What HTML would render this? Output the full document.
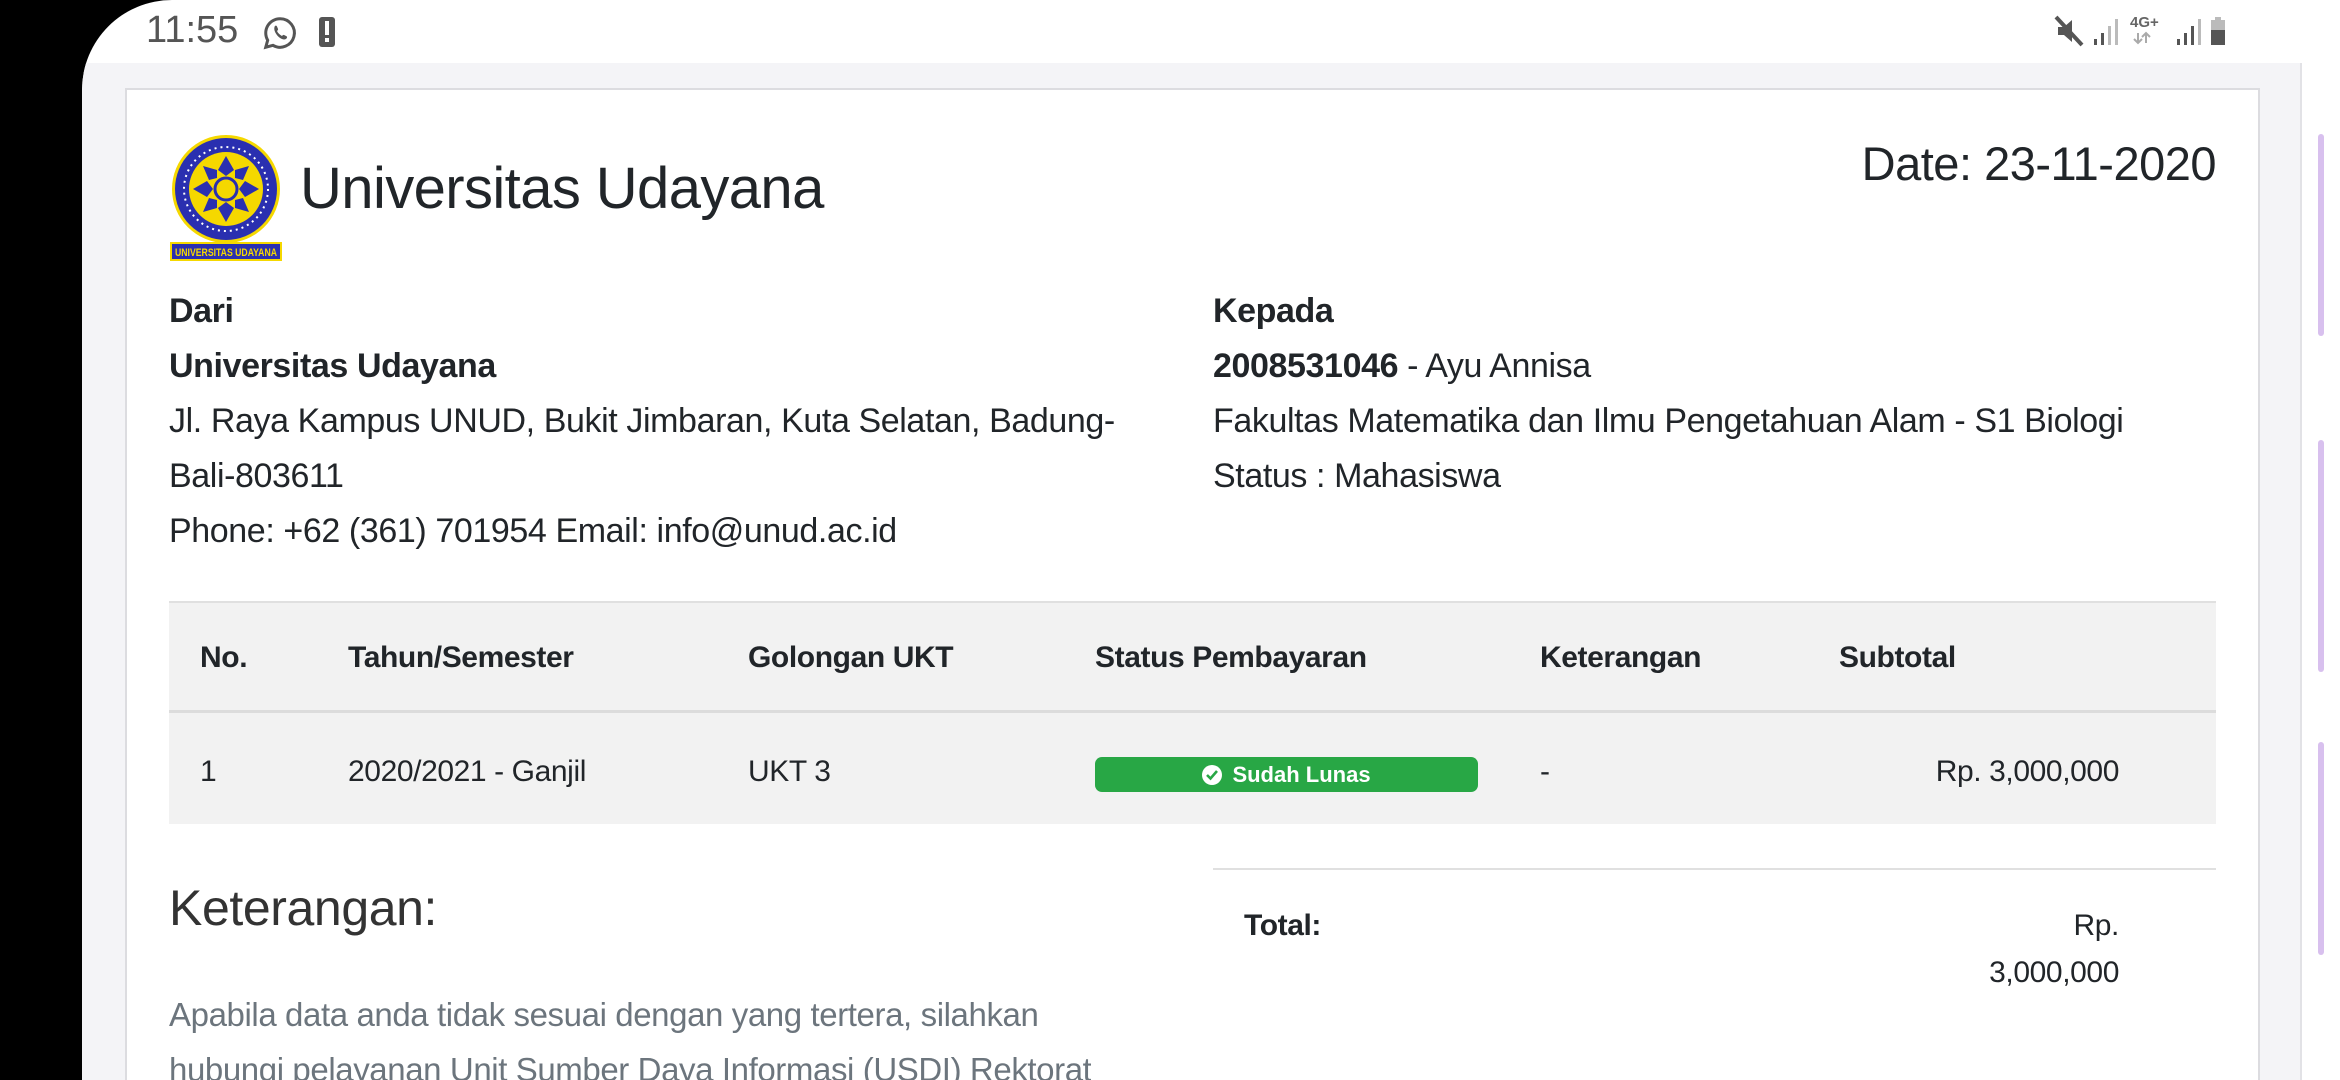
<!DOCTYPE html>
<html><head><meta charset="utf-8"><style>
*{margin:0;padding:0;box-sizing:border-box}
html,body{width:2340px;height:1080px;overflow:hidden;background:#000;font-family:"Liberation Sans",sans-serif;color:#212529}
.screen{position:absolute;left:82px;top:0;width:2258px;height:1080px;background:#fff;border-top-left-radius:90px;overflow:hidden}
.bg{position:absolute;left:0;top:63px;width:2220px;height:1017px;background:#f4f4f7;border-right:2px solid #e2e2e6}
.card{position:absolute;left:43px;top:88px;width:2135px;height:992px;background:#fff;border:2px solid #dcdce0;border-bottom:none}
.t{position:absolute;white-space:nowrap;font-size:34px;letter-spacing:-0.4px;line-height:40px}
.b{font-weight:bold}
.sb{position:absolute;left:2236px;width:6px;border-radius:3px;background:#d8c0ee}
</style></head><body>
<div class="screen">
 <div class="t" style="left:64px;top:10px;font-size:38px;color:#555;letter-spacing:0">11:55</div>
 <svg style="position:absolute;left:180px;top:15px" width="36" height="36" viewBox="0 0 24 24"><path d="M12 2.5a9.5 9.5 0 0 0-8.2 14.3L2.5 21.5l4.8-1.3A9.5 9.5 0 1 0 12 2.5z" fill="none" stroke="#555" stroke-width="2"/><path d="M8.5 7.5c.5-.6 1.2-.5 1.5.2l.7 1.6c.2.5-.4 1-.7 1.4.7 1.5 1.9 2.6 3.3 3.3.4-.4.9-1 1.4-.7l1.5.8c.6.3.7 1 .2 1.5-1.3 1.4-3.5.6-5.2-.9-1.6-1.5-3.9-4.6-2.7-7.2z" fill="#555"/></svg>
 <div style="position:absolute;left:237px;top:17px;width:16px;height:30px;background:#555;border-radius:3px"></div>
 <div style="position:absolute;left:243px;top:21px;width:4px;height:14px;background:#fff"></div>
 <div style="position:absolute;left:243px;top:38px;width:4px;height:4px;background:#fff"></div>
 <svg style="position:absolute;left:1972px;top:12px" width="200" height="38" viewBox="0 0 200 36">
  <path d="M4 14h6l8-7v22l-8-7H4z" fill="#555"/><path d="M2 4l26 28" stroke="#555" stroke-width="4"/>
  <rect x="40" y="26" width="3" height="6" fill="#555"/><rect x="47" y="20" width="3" height="12" fill="#555"/><rect x="54" y="13" width="3" height="19" fill="#bbb"/><rect x="61" y="6" width="3" height="26" fill="#bbb"/>
  <text x="76" y="14" font-size="15" font-weight="bold" fill="#666" font-family="Liberation Sans">4G+</text>
  <path d="M84 20v10M80 26l4 4 4-4M92 30V20M88 24l4-4 4 4" stroke="#aaa" stroke-width="2" fill="none"/>
  <rect x="123" y="26" width="3" height="6" fill="#555"/><rect x="130" y="20" width="3" height="12" fill="#555"/><rect x="137" y="13" width="3" height="19" fill="#555"/><rect x="144" y="6" width="3" height="26" fill="#bbb"/>
  <rect x="161" y="4" width="6" height="3" fill="#bbb"/><rect x="157" y="7" width="14" height="10" fill="#bbb"/><rect x="157" y="17" width="14" height="15" fill="#555"/>
 </svg>
 <div class="bg"></div>
 <div class="sb" style="top:134px;height:202px"></div>
 <div class="sb" style="top:440px;height:232px"></div>
 <div class="sb" style="top:742px;height:213px"></div>
 <div class="card"></div>
 <svg style="position:absolute;left:87px;top:134px" width="116" height="128" viewBox="0 0 116 128">
  <circle cx="57" cy="55" r="54" fill="#f5d800"/>
  <circle cx="57" cy="55" r="51" fill="#2a2fb0"/>
  <circle cx="57" cy="55" r="42" fill="none" stroke="#fff" stroke-width="2" stroke-dasharray="2 4"/>
  <circle cx="57" cy="55" r="37" fill="#f5d800"/>
  <g fill="#2a2fb0">
   <path d="M57 22l8 14-8 6-8-6z"/><path d="M57 88l8-14-8-6-8 6z"/><path d="M24 55l14-8 6 8-6 8z"/><path d="M90 55l-14-8-6 8 6 8z"/>
   <path d="M34 32l14 4 0 8-8 2z"/><path d="M80 32l-14 4 0 8 8 2z"/><path d="M34 78l14-4 0-8-8-2z"/><path d="M80 78l-14-4 0-8 8-2z"/>
  </g>
  <circle cx="57" cy="55" r="11" fill="#f5d800" stroke="#2a2fb0" stroke-width="3"/>
  <rect x="1" y="108" width="112" height="19" fill="#f5d800"/><rect x="3" y="110" width="108" height="15" fill="#2a2fb0"/>
  <text x="57" y="122" text-anchor="middle" font-size="11" font-weight="bold" fill="#f5d800" font-family="Liberation Sans" textLength="102" lengthAdjust="spacingAndGlyphs">UNIVERSITAS UDAYANA</text>
 </svg>
 <div class="t" style="left:218px;top:154px;font-size:58px;line-height:70px;letter-spacing:-0.6px">Universitas Udayana</div>
 <div class="t" style="right:124px;top:136px;font-size:47px;line-height:56px;letter-spacing:-0.5px">Date: 23-11-2020</div>

 <div class="t b" style="left:87px;top:291px">Dari</div>
 <div class="t b" style="left:87px;top:346px">Universitas Udayana</div>
 <div class="t" style="left:87px;top:401px">Jl. Raya Kampus UNUD, Bukit Jimbaran, Kuta Selatan, Badung-</div>
 <div class="t" style="left:87px;top:456px">Bali-803611</div>
 <div class="t" style="left:87px;top:511px">Phone: +62 (361) 701954 Email: info@unud.ac.id</div>

 <div class="t b" style="left:1131px;top:291px">Kepada</div>
 <div class="t" style="left:1131px;top:346px"><b>2008531046</b> - Ayu Annisa</div>
 <div class="t" style="left:1131px;top:401px">Fakultas Matematika dan Ilmu Pengetahuan Alam - S1 Biologi</div>
 <div class="t" style="left:1131px;top:456px">Status : Mahasiswa</div>

 <div style="position:absolute;left:87px;top:601px;width:2047px;height:112px;background:#f2f2f2;border-top:2px solid #e0e0e0;border-bottom:3px solid #dcdcdc"></div>
 <div style="position:absolute;left:87px;top:713px;width:2047px;height:111px;background:#f2f2f2"></div>
 <div class="t b" style="left:118px;top:638px;font-size:30px">No.</div>
 <div class="t b" style="left:266px;top:638px;font-size:30px">Tahun/Semester</div>
 <div class="t b" style="left:666px;top:638px;font-size:30px">Golongan UKT</div>
 <div class="t b" style="left:1013px;top:638px;font-size:30px">Status Pembayaran</div>
 <div class="t b" style="left:1458px;top:638px;font-size:30px">Keterangan</div>
 <div class="t b" style="left:1757px;top:638px;font-size:30px">Subtotal</div>
 <div class="t" style="left:118px;top:752px;font-size:30px">1</div>
 <div class="t" style="left:266px;top:752px;font-size:30px">2020/2021 - Ganjil</div>
 <div class="t" style="left:666px;top:752px;font-size:30px">UKT 3</div>
 <div style="position:absolute;left:1013px;top:757px;width:383px;height:35px;background:#28a745;border-radius:7px;color:#fff;font-weight:bold;font-size:22px;line-height:35px;text-align:center">
  <span style="display:inline-block;width:20px;height:20px;border-radius:50%;background:#fff;vertical-align:-3px;margin-right:10px;position:relative"><svg style="position:absolute;left:3px;top:4px" width="14" height="12" viewBox="0 0 14 12"><path d="M2 6l3.5 3.5L12 2" stroke="#28a745" stroke-width="2.6" fill="none"/></svg></span>Sudah Lunas</div>
 <div class="t" style="left:1458px;top:752px;font-size:30px">-</div>
 <div class="t" style="right:221px;top:752px;font-size:30px">Rp. 3,000,000</div>

 <div style="position:absolute;left:1131px;top:868px;width:1003px;height:2px;background:#e0e0e0"></div>
 <div class="t" style="left:87px;top:878px;font-size:50px;line-height:60px;color:#333">Keterangan:</div>
 <div class="t b" style="left:1162px;top:906px;font-size:30px">Total:</div>
 <div class="t" style="right:221px;top:906px;font-size:30px">Rp.</div>
 <div class="t" style="right:221px;top:953px;font-size:30px">3,000,000</div>
 <div class="t" style="left:87px;top:995px;color:#6c757d;font-size:33px">Apabila data anda tidak sesuai dengan yang tertera, silahkan</div>
 <div class="t" style="left:87px;top:1050px;color:#6c757d;font-size:33px;height:30px;overflow:hidden">hubungi pelayanan Unit Sumber Daya Informasi (USDI) Rektorat</div>
</div>
</body></html>
